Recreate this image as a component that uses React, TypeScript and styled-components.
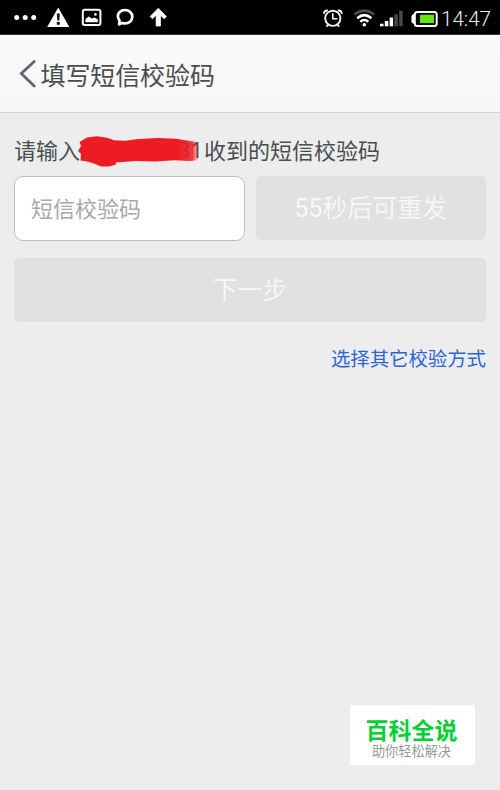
import React from "react";
import styled, { createGlobalStyle } from "styled-components";

const GlobalStyle = createGlobalStyle`
  * { box-sizing: border-box; }
  html, body { margin: 0; padding: 0; background: #ededed; }
  body { font-family: "Noto Sans CJK SC", "Noto Sans", sans-serif; color: #484d50; }
`;

const Screen = styled.div`
  width: 500px;
  height: 790px;
  display: flex;
  flex-direction: column;
  background: #ededed;
  overflow: hidden;
`;

const StatusBar = styled.div`
  height: 35px;
  flex: none;
  display: flex;
  justify-content: space-between;
  background: #000;
  border-bottom: 1px solid #3a3436;
`;

const StatusIcons = styled.svg`
  display: block;
  flex: none;
`;

const StatusRight = styled.div`
  display: flex;
  width: 179px;
`;

const Clock = styled.span`
  font: 300 20.6px/38px Roboto, sans-serif;
  color: #f0f0f0;
  white-space: nowrap;
  margin-left: 1px;
`;

const Header = styled.header`
  height: 78px;
  flex: none;
  display: flex;
  align-items: center;
  padding: 0 0 0 18px;
  background: linear-gradient(#fafafa, #f7f7f7);
  border-bottom: 1px solid #d6d6d6;
`;

const BackIcon = styled.svg`
  width: 18px;
  height: 30px;
  margin-right: 4.5px;
  flex: none;
`;

const Title = styled.h1`
  margin: 1px 0 0;
  font-size: 25px;
  line-height: 36px;
  font-weight: 400;
  letter-spacing: -0.1px;
  white-space: nowrap;
`;

const Form = styled.main`
  flex: 1;
  display: flex;
  flex-direction: column;
  padding: 20px 14px 0;
`;

const Prompt = styled.div`
  display: flex;
  height: 43px;
  font-size: 22px;
  line-height: 32px;
  white-space: nowrap;
`;

const HiddenNumber = styled.span`
  position: relative;
  width: 124px;
  text-align: right;
  padding-right: 1px;
  font-family: "Noto Sans", sans-serif;
`;

const Scribble = styled.svg`
  position: absolute;
  left: -3px;
  top: 1px;
`;

const CodeRow = styled.div`
  display: grid;
  grid-template-columns: 1fr 1fr;
  column-gap: 11px;
  height: 65px;
`;

const CodeInput = styled.input`
  width: 100%;
  height: 65px;
  padding: 0 16px 3px;
  border: 1px solid #bdbdbd;
  border-radius: 9px;
  background: #fff;
  font: 22px/32px "Noto Sans CJK SC", sans-serif;
  outline: none;
  &::placeholder { color: #a9a9a9; opacity: 1; }
`;

const GreyButton = styled.button`
  height: 64px;
  padding: 0 0 2px;
  border: 0;
  border-radius: 5px;
  background: #e1e1e1;
  color: #f8f8f8;
  font: 350 25px/36px "Noto Sans CJK SC", sans-serif;
  white-space: nowrap;
`;

const Digits = styled.span`
  font-family: Roboto, sans-serif;
  font-weight: 400;
`;

const NextButton = styled(GreyButton)`
  padding-bottom: 4px;
  margin-top: 17px;
`;

const OtherLink = styled.a`
  align-self: flex-end;
  margin-top: 22px;
  font-size: 19.4px;
  line-height: 28px;
  color: #2b64d9;
`;

const Brand = styled.aside`
  align-self: flex-end;
  display: flex;
  flex-direction: column;
  align-items: center;
  width: 125px;
  height: 60px;
  margin: auto 25px 25px 0;
  padding: 9px 2px 0 0;
  background: #fff;
  white-space: nowrap;
`;

const BrandName = styled.strong`
  font-size: 23px;
  line-height: 30px;
  color: #06cf35;
  font-weight: 700;
`;

const BrandLine = styled.span`
  font-size: 13.2px;
  line-height: 14px;
  color: #999;
`;

const NoticeGlyphs = () => (
  <StatusIcons width="180" height="34" viewBox="0 0 180 34">
    <g fill="#fff">
      <circle cx="16.7" cy="17.6" r="2.5" />
      <circle cx="25.2" cy="17.6" r="2.5" />
      <circle cx="33.7" cy="17.6" r="2.5" />
      <path d="M58.2 7.5 69.3 27H47.2Z" />
      <path d="M158.3 8.2 166.4 16.4 164.2 18.8 160.5 15.2V26H156.1V15.2L152.4 18.8 150.2 16.4Z" stroke="#fff" strokeWidth=".7" strokeLinejoin="round" />
    </g>
    <path d="M56.8 13.5h3l-.5 7h-2zM56.8 22h3v2.7h-3z" fill="#111" />
    <rect x="82.8" y="9.8" width="17.6" height="15.2" rx="2" fill="none" stroke="#fff" strokeWidth="2" />
    <path d="M85.4 22.2v-3l3.2-2.8 3.4 2 2.5-1 3.4 2.2v2.6Z" fill="#fff" />
    <circle cx="95.4" cy="14.4" r="1.3" fill="#fff" />
    <path d="M119.5 20.6C115.8 15.2 119.2 10 125 10c4.3 0 7.3 3 7.3 6.7s-3 6.7-7.3 6.7c-1.1 0-1.9-.1-2.9-.5l-2.9 1.4Z" fill="none" stroke="#fff" strokeWidth="2.7" strokeLinejoin="round" />
  </StatusIcons>
);

const DeviceGlyphs = () => (
  <StatusIcons width="119" height="34" viewBox="321 0 119 34">
    <g fill="none" stroke="#f2f2f2" strokeLinecap="round">
      <circle cx="332.8" cy="18.3" r="7.6" strokeWidth="1.9" />
      <path d="M332.8 13.7v5h4" strokeWidth="1.6" />
      <path d="M324 13.2q0-2.4 3.2-2.7M341.7 13.2q0-2.4-3.2-2.7M328 25l-1 1M337.7 25l1 1" strokeWidth="1.8" />
    </g>
    <g fill="none" strokeWidth="2.5">
      <path d="M354.4 14.5q9.9-7.8 19.8 0" stroke="#4a4a4a" />
      <path d="M357.2 18.2q7.1-6.2 14.2 0" stroke="#fff" />
      <path d="M360.3 21.8q4-3.6 8 0" stroke="#fff" />
    </g>
    <circle cx="364.3" cy="24.8" r="1.8" fill="#fff" />
    <g fill="#fff">
      <rect x="380" y="23.7" width="3.5" height="2.6" />
      <rect x="384.8" y="21" width="3.5" height="5.3" />
      <rect x="389.6" y="17.5" width="3.5" height="8.8" />
    </g>
    <g fill="#484848">
      <rect x="394.4" y="14.2" width="3.5" height="12.1" />
      <rect x="399.2" y="10.6" width="3.5" height="15.7" />
    </g>
    <path d="M414.2 13.8q-2.8.6-2.8 2.6v4.9q0 2 2.8 2.6Z" fill="#fff" />
    <rect x="414.8" y="12" width="21.9" height="13.9" rx="2.5" fill="none" stroke="#fff" strokeWidth="2" />
    <rect x="420" y="14.7" width="14" height="8.4" fill="#67e512" />
  </StatusIcons>
);

export default function App() {
  return (
    <>
      <GlobalStyle />
      <Screen>
        <StatusBar>
          <NoticeGlyphs />
          <StatusRight>
            <DeviceGlyphs />
            <Clock>14:47</Clock>
          </StatusRight>
        </StatusBar>
        <Header>
          <BackIcon viewBox="0 0 18 30">
            <path d="M16.2 2.5 3.3 14.5 16.2 27" fill="none" stroke="#5f6673" strokeWidth="2.8" strokeLinecap="round" />
          </BackIcon>
          <Title>填写短信校验码</Title>
        </Header>
        <Form>
          <Prompt>
            <span>请输入</span>
            <HiddenNumber>
              31
              <Scribble width="125" height="36" viewBox="77 134 125 36">
                <defs>
                  <linearGradient id="inkFade" gradientUnits="userSpaceOnUse" x1="77" y1="0" x2="200" y2="0">
                    <stop offset="0.82" stopColor="#ed1c24" />
                    <stop offset="0.88" stopColor="#ed1c24" stopOpacity=".92" />
                    <stop offset="0.94" stopColor="#ed1c24" stopOpacity=".84" />
                    <stop offset="0.99" stopColor="#ed1c24" stopOpacity="0" />
                  </linearGradient>
                </defs>
                <path d="M78 151 81 146 79.5 142 87 137.5 97 136.3 107 137.8 114 140.3 125 140.7 138 139 158 138 176 138.8 187 140.5 197 142 199 149 198.5 160 190 161 174 160.3 155 161.5 136 161 116 162.5 115.5 164.8 109 166.5 101 166.5 94 163.5 87 161.5 80.5 160.5 81 154Z" fill="url(#inkFade)" />
              </Scribble>
            </HiddenNumber>
            <span>收到的短信校验码</span>
          </Prompt>
          <CodeRow>
            <CodeInput placeholder="短信校验码" aria-label="短信校验码" />
            <GreyButton>
              <Digits>55</Digits>秒后可重发
            </GreyButton>
          </CodeRow>
          <NextButton>下一步</NextButton>
          <OtherLink>选择其它校验方式</OtherLink>
        </Form>
        <Brand>
          <BrandName>百科全说</BrandName>
          <BrandLine>助你轻松解决</BrandLine>
        </Brand>
      </Screen>
    </>
  );
}
